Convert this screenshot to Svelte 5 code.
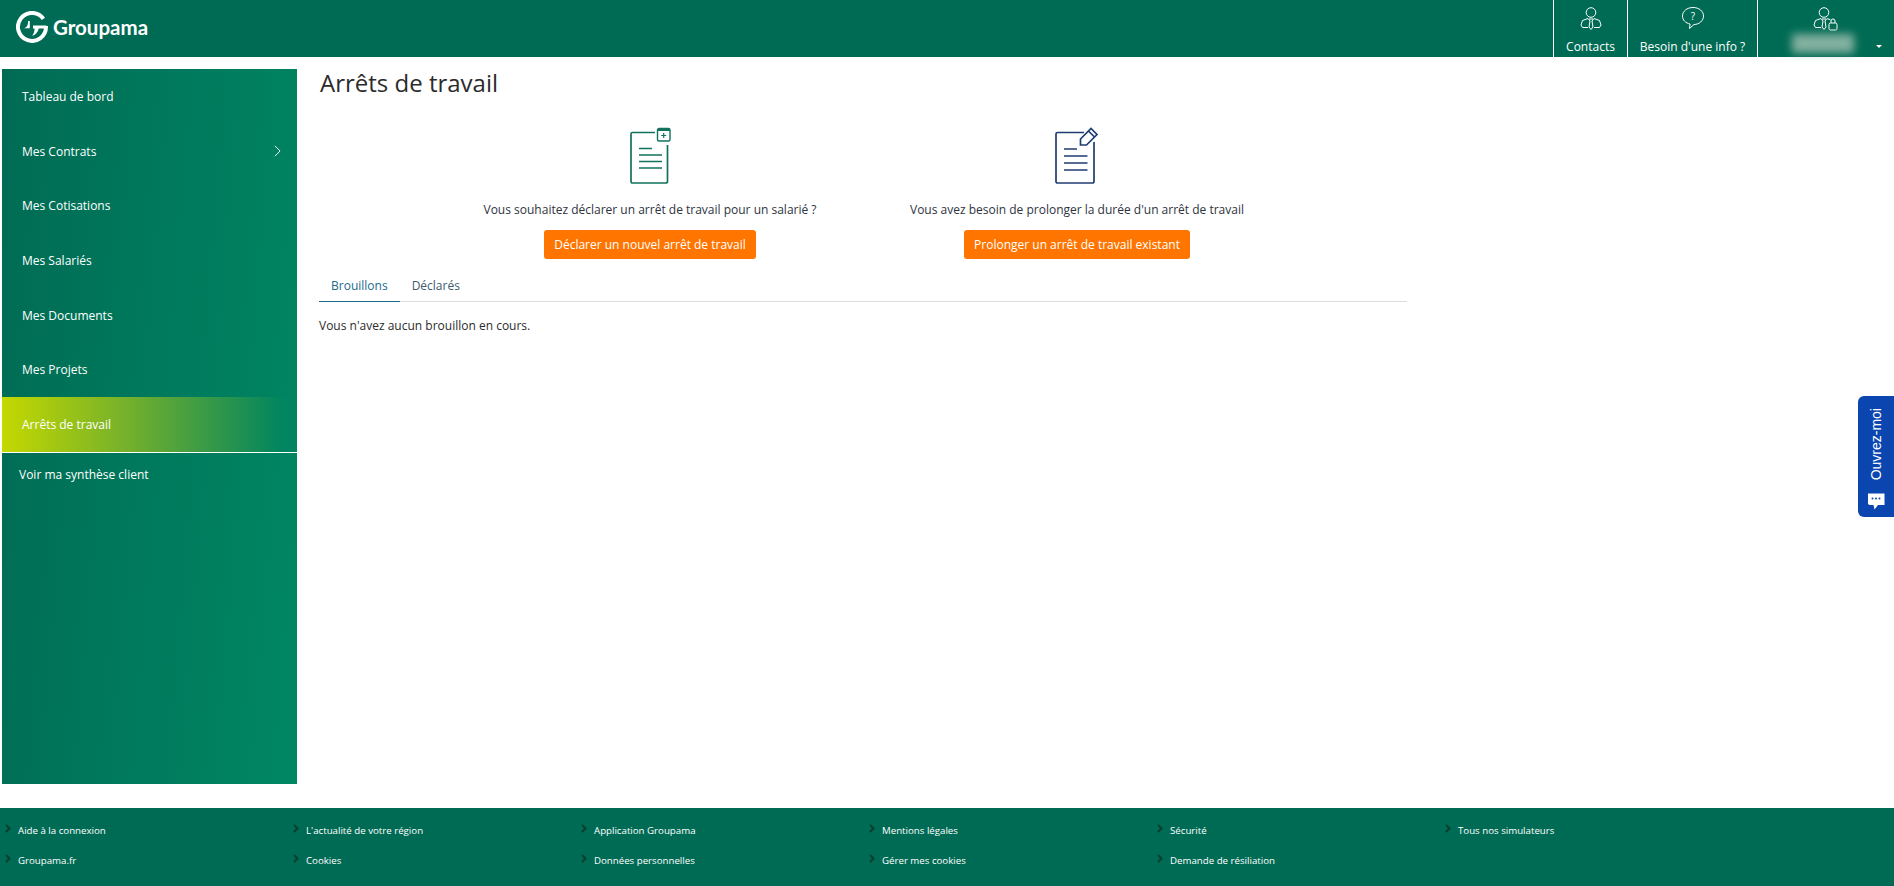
<script>
  const menu = [
    { label: 'Tableau de bord' },
    { label: 'Mes Contrats', arrow: true },
    { label: 'Mes Cotisations' },
    { label: 'Mes Salariés' },
    { label: 'Mes Documents' },
    { label: 'Mes Projets' },
    { label: 'Arrêts de travail', active: true }
  ];

  const footerLinks = [
    'Aide à la connexion',
    "L'actualité de votre région",
    'Application Groupama',
    'Mentions légales',
    'Sécurité',
    'Tous nos simulateurs',
    'Groupama.fr',
    'Cookies',
    'Données personnelles',
    'Gérer mes cookies',
    'Demande de résiliation'
  ];
</script>

<div class="page">
  <header class="topbar">
    <div class="brand">
      <svg class="logo" viewBox="0 0 32 32" width="32" height="32" aria-hidden="true">
        <path d="M27.400 7.800A14 14 0 1 0 30 16v-1" fill="none" stroke="#fff" stroke-width="4" />
        <path d="M17 14.600h13.400v2.800H22.800c-1 4-3.400 6.400-6.600 7.400 1.400-2 2.200-4.200 2.400-7.400H17z" fill="#fff" />
        <path d="M5 17.200c2.600.2 4.600-.4 5.800-1.800.8-.9 1.200-2.600 1.400-5.400h1.600v7.200c-2.600-.2-4.800.4-8.800 0z" fill="#fff" />
      </svg>
      <span class="brand-name">Groupama</span>
    </div>
    <nav class="tools">
      <div class="tool contacts">
        <svg viewBox="0 0 24 26" width="24" height="26" fill="none" stroke="#fff" stroke-width="1" aria-hidden="true">
          <circle cx="12" cy="6.500" r="4.800" />
          <path d="M9 12.500 3.500 14.500 2 19l1.500 2.500H9M15 12.500 20.500 14.500 22 19l-1.500 2.500H15" />
          <path d="M9.500 13h5l-1.500 2 1 6-2 2.500-2-2.500 1-6z" />
        </svg>
        <span>Contacts</span>
      </div>
      <div class="tool info">
        <svg viewBox="0 0 24 24" width="24" height="24" fill="none" stroke="#fff" stroke-width="1" aria-hidden="true">
          <path d="M12 1.500c6 0 10.500 3.700 10.500 8.500S18 18.500 13 18.500l-4.500 4 .5-4.500C4.500 17 1.500 14 1.500 10 1.500 5.200 6 1.500 12 1.500z" />
          <text x="12" y="14" text-anchor="middle" class="qmark">?</text>
        </svg>
        <span>Besoin d'une info ?</span>
      </div>
      <div class="tool account">
        <svg viewBox="0 0 26 26" width="26" height="26" fill="none" stroke="#fff" stroke-width="1" aria-hidden="true">
          <circle cx="11" cy="6.500" r="4.800" />
          <path d="M8 12.500 2.500 14.500 1 19l1.500 2.500H8M14 12.500l3.500 1.300" />
          <path d="M8.500 13h5l-1.500 2 1 6-2 2.500-2-2.500 1-6z" />
          <rect x="16" y="17" width="8" height="7" rx="1.500" />
          <path d="M18 17v-2a2 2 0 0 1 4 0v2" />
        </svg>
        <div class="user-line">
          <span class="user-blur"></span>
          <span class="caret"></span>
        </div>
      </div>
    </nav>
  </header>

  <div class="middle">
    <aside class="sidebar">
      <ul class="menu">
        {#each menu as item}
          <li class="menu-item" class:active={item.active}>
            <span>{item.label}</span>
            {#if item.arrow}
              <svg viewBox="0 0 8 14" width="7" height="12" fill="none" stroke="#fff" stroke-width="1.100" aria-hidden="true">
                <path d="M1 1l6 6-6 6" />
              </svg>
            {/if}
          </li>
        {/each}
      </ul>
      <div class="synthese">Voir ma synthèse client</div>
    </aside>

    <main class="content">
      <h1>Arrêts de travail</h1>
      <section class="actions">
        <div class="action first">
          <svg viewBox="0 0 42 58" width="42" height="58" fill="none" stroke="#12735c" stroke-width="1.700" aria-hidden="true">
            <path d="M26 5.500H3.500a1.500 1.500 0 0 0-1.500 1.500v47.500a1.500 1.500 0 0 0 1.500 1.500h33.500a1.500 1.500 0 0 0 1.500-1.500V18" />
            <path d="M10 21.500h13M10 28h23M10 34.500h23M10 41h23" />
            <rect x="28.500" y="1.500" width="12.500" height="12.500" rx="1.500" stroke-width="1.400" />
            <path d="M28.500 3h12.500" stroke-width="2" />
            <path d="M34.700 6v5M32.200 8.500h5" stroke-width="1.200" />
          </svg>
          <p>Vous souhaitez déclarer un arrêt de travail pour un salarié ?</p>
          <button type="button">Déclarer un nouvel arrêt de travail</button>
        </div>
        <div class="action second">
          <svg viewBox="0 0 46 58" width="46" height="58" fill="none" stroke="#1f3d72" stroke-width="1.700" aria-hidden="true">
            <path d="M30 5.500H3.500a1.500 1.500 0 0 0-1.500 1.500v47.500a1.500 1.500 0 0 0 1.500 1.500h35a1.500 1.500 0 0 0 1.500-1.500V15" />
            <path d="M10 22h13M10 29h23.500M10 36h23.500M10 43h23.500" />
            <path d="M26.500 18v-6L37 1.500l6 6L32.500 18z" />
            <path d="M34.500 4l6 6" />
          </svg>
          <p>Vous avez besoin de prolonger la durée d'un arrêt de travail</p>
          <button type="button">Prolonger un arrêt de travail existant</button>
        </div>
      </section>

      <div class="tabs">
        <span class="tab selected">Brouillons</span>
        <span class="tab">Déclarés</span>
      </div>
      <p class="empty">Vous n'avez aucun brouillon en cours.</p>
    </main>
  </div>

  <footer class="footer">
    {#each footerLinks as link}
      <div class="foot-link">
        <svg viewBox="0 0 6 9" width="6" height="9" fill="none" stroke="#0a3f2e" stroke-width="2" aria-hidden="true">
          <path d="M1 1l3.500 3.500L1 8" />
        </svg>
        <span>{link}</span>
      </div>
    {/each}
  </footer>

  <div class="chat-tab">
    <span class="chat-label">Ouvrez-moi</span>
    <svg viewBox="0 0 20 20" width="20" height="20" aria-hidden="true">
      <path d="M2 2.500h16.500v11.500h-6.500l-3.500 4.500-1-4.500H3.500L2 13z" fill="#fff" />
      <circle cx="6.500" cy="7.500" r="1" fill="#0b45b0" />
      <circle cx="10" cy="7.500" r="1" fill="#0b45b0" />
      <circle cx="13.500" cy="7.500" r="1" fill="#0b45b0" />
    </svg>
  </div>
</div>

<style>
  :global(body) {
    margin: 0;
    background: #fff;
    font-family: "Open Sans", "Noto Sans", sans-serif;
    color: #2b2b2b;
  }

  .page {
    display: grid;
    grid-template-rows: 57px 1fr 78px;
    height: 886px;
    overflow: hidden;
  }

  .topbar {
    display: flex;
    justify-content: space-between;
    background: #006b54;
    color: #fff;
  }

  .brand {
    display: flex;
    align-items: center;
    gap: 5px;
    padding: 0 0 3px 16px;
  }

  .brand-name {
    font-family: Lato, "Open Sans", sans-serif;
    font-size: 20.500px;
    font-weight: 700;
  }

  .tools {
    display: flex;
  }

  .tool {
    display: flex;
    flex-direction: column;
    align-items: center;
    justify-content: space-between;
    box-sizing: border-box;
    height: 57px;
    padding: 6px 0 2px;
    border-left: 1px solid #fff;
    font-size: 12px;
    line-height: 16px;
  }

  .tool svg .qmark {
    font-size: 10px;
    fill: #fff;
    stroke: none;
  }

  .contacts {
    width: 74px;
  }

  .info {
    width: 130px;
  }

  .account {
    width: 137px;
    padding-bottom: 1px;
  }

  .user-line {
    position: relative;
    width: 100%;
    height: 24px;
  }

  .user-blur {
    position: absolute;
    left: 34px;
    top: 2px;
    width: 62px;
    height: 19px;
    background: #83b0a0;
    filter: blur(4px);
  }

  .caret {
    position: absolute;
    right: 12px;
    top: 13px;
    border: 3px solid transparent;
    border-top: 3px solid #fff;
  }

  .middle {
    display: flex;
    align-items: flex-start;
    padding-top: 12px;
  }

  .sidebar {
    box-sizing: border-box;
    flex: 0 0 295px;
    height: 715px;
    margin: 0 22px 0 2px;
    background: linear-gradient(95deg, #006b54 0%, #00795c 50%, #008763 100%);
    color: #fff;
    font-size: 12px;
  }

  .menu {
    list-style: none;
    margin: 0;
    padding: 0;
    border-bottom: 1px solid #fff;
  }

  .menu-item {
    display: flex;
    align-items: center;
    justify-content: space-between;
    box-sizing: border-box;
    height: 54.700px;
    padding: 0 16px 0 20px;
  }

  .menu-item.active {
    background: linear-gradient(90deg, #c5d800 0%, #6fae2e 45%, #008560 95%);
  }

  .synthese {
    padding: 13px 0 0 17px;
    line-height: 18px;
  }

  .content {
    flex: 0 0 1088px;
  }

  h1 {
    margin: 0;
    padding-left: 1px;
    font-size: 24px;
    font-weight: 400;
    line-height: 28px;
    color: #2b2b2b;
  }

  .actions {
    display: flex;
    padding-top: 30px;
  }

  .action {
    display: flex;
    flex-direction: column;
    align-items: center;
  }

  .action.first {
    margin-left: 164px;
    width: 334px;
  }

  .action.second {
    margin-left: 92px;
    width: 336px;
  }

  .action p {
    margin: 16px 0 0;
    font-size: 12px;
    line-height: 18px;
    white-space: nowrap;
    color: #2d3340;
  }

  .action button {
    margin-top: 11px;
    height: 29px;
    padding: 0 10px;
    border: none;
    border-radius: 3px;
    background: #ff7500;
    color: #fff;
    font: 400 12px "Open Sans", sans-serif;
  }

  .tabs {
    display: flex;
    margin-top: 10px;
    border-bottom: 1px solid #dedede;
    font-size: 12px;
  }

  .tab {
    padding: 8px 12px 7px;
    line-height: 17px;
    color: #3d5a6e;
  }

  .tab.selected {
    margin-bottom: -1px;
    color: #1b6a8c;
    border-bottom: 1px solid #1b6a8c;
  }

  .empty {
    margin: 15px 0 0;
    font-size: 12px;
    line-height: 18px;
  }

  .footer {
    display: grid;
    grid-template-columns: repeat(6, 288px);
    grid-auto-rows: 30px;
    padding: 7px 0 0 5px;
    background: #006b54;
    color: #fff;
    font-size: 9.700px;
    font-weight: 400;
  }

  .foot-link {
    display: flex;
    align-items: center;
    gap: 7px;
  }

  .foot-link svg {
    margin-top: -4px;
  }

  .chat-tab {
    position: fixed;
    right: 0;
    top: 396px;
    display: flex;
    flex-direction: column;
    align-items: center;
    gap: 11px;
    box-sizing: border-box;
    width: 36px;
    height: 121px;
    padding-top: 12px;
    border-radius: 6px 0 0 6px;
    background: #0b45b0;
    color: #fff;
  }

  .chat-label {
    font-family: "Liberation Sans", Arial, sans-serif;
    font-size: 14px;
    writing-mode: vertical-rl;
    transform: rotate(180deg);
  }
</style>
